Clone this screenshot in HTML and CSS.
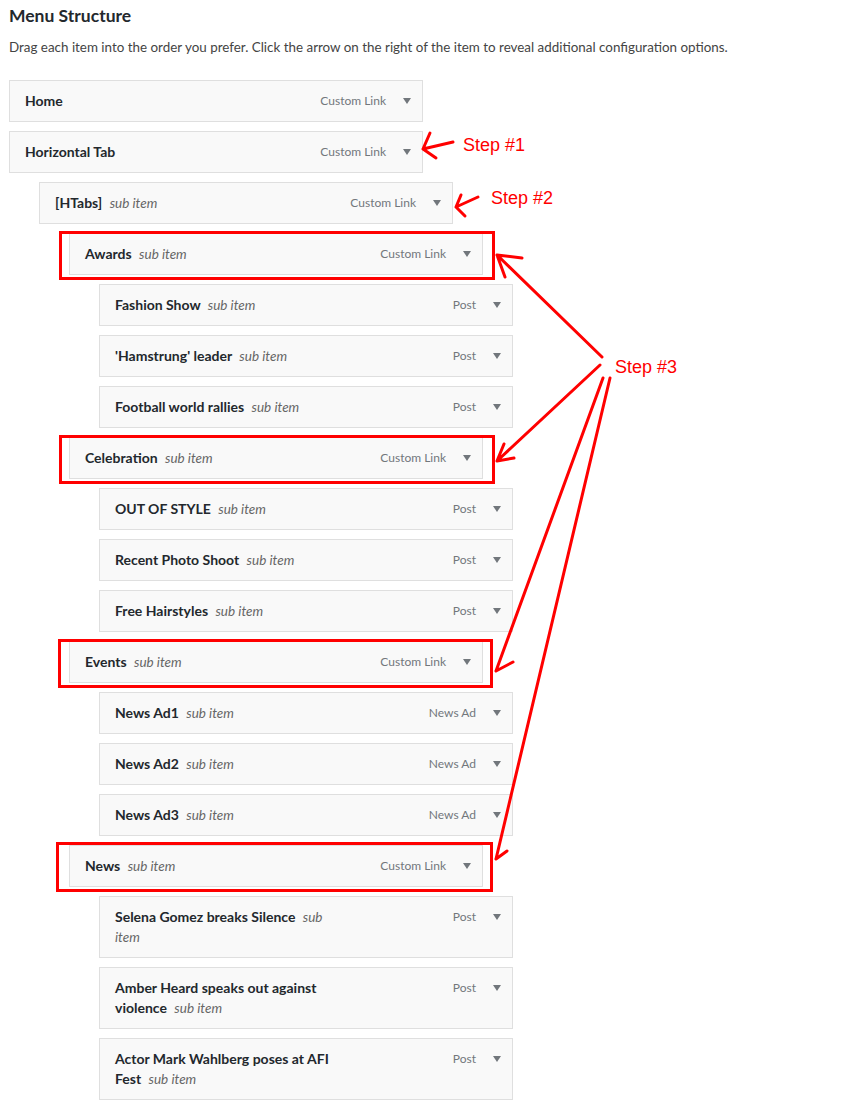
FILE: index.html
```html
<!DOCTYPE html>
<html lang="en">
<head>
<meta charset="utf-8">
<title>Menu Structure</title>
<link rel="stylesheet" href="styles.css">
</head>
<body>
<div class="page">
  <h2 class="heading">Menu Structure</h2>
  <p class="desc">Drag each item into the order you prefer. Click the arrow on the right of the item to reveal additional configuration options.</p>
  <ul class="menu">
    <li class="item d0"><span class="title">Home</span><span class="controls"><span class="type">Custom Link</span><span class="arrow"></span></span></li>
    <li class="item d0"><span class="title">Horizontal Tab</span><span class="controls"><span class="type">Custom Link</span><span class="arrow"></span></span></li>
    <li class="item d1"><span class="title">[HTabs] <em class="sub">sub item</em></span><span class="controls"><span class="type">Custom Link</span><span class="arrow"></span></span></li>
    <li class="item d2"><span class="title">Awards <em class="sub">sub item</em></span><span class="controls"><span class="type">Custom Link</span><span class="arrow"></span></span></li>
    <li class="item d3"><span class="title">Fashion Show <em class="sub">sub item</em></span><span class="controls"><span class="type">Post</span><span class="arrow"></span></span></li>
    <li class="item d3"><span class="title">'Hamstrung' leader <em class="sub">sub item</em></span><span class="controls"><span class="type">Post</span><span class="arrow"></span></span></li>
    <li class="item d3"><span class="title">Football world rallies <em class="sub">sub item</em></span><span class="controls"><span class="type">Post</span><span class="arrow"></span></span></li>
    <li class="item d2"><span class="title">Celebration <em class="sub">sub item</em></span><span class="controls"><span class="type">Custom Link</span><span class="arrow"></span></span></li>
    <li class="item d3"><span class="title">OUT OF STYLE <em class="sub">sub item</em></span><span class="controls"><span class="type">Post</span><span class="arrow"></span></span></li>
    <li class="item d3"><span class="title">Recent Photo Shoot <em class="sub">sub item</em></span><span class="controls"><span class="type">Post</span><span class="arrow"></span></span></li>
    <li class="item d3"><span class="title">Free Hairstyles <em class="sub">sub item</em></span><span class="controls"><span class="type">Post</span><span class="arrow"></span></span></li>
    <li class="item d2"><span class="title">Events <em class="sub">sub item</em></span><span class="controls"><span class="type">Custom Link</span><span class="arrow"></span></span></li>
    <li class="item d3"><span class="title">News Ad1 <em class="sub">sub item</em></span><span class="controls"><span class="type">News Ad</span><span class="arrow"></span></span></li>
    <li class="item d3"><span class="title">News Ad2 <em class="sub">sub item</em></span><span class="controls"><span class="type">News Ad</span><span class="arrow"></span></span></li>
    <li class="item d3"><span class="title">News Ad3 <em class="sub">sub item</em></span><span class="controls"><span class="type">News Ad</span><span class="arrow"></span></span></li>
    <li class="item d2"><span class="title">News <em class="sub">sub item</em></span><span class="controls"><span class="type">Custom Link</span><span class="arrow"></span></span></li>
    <li class="item d3"><span class="title">Selena Gomez breaks Silence <em class="sub">sub item</em></span><span class="controls"><span class="type">Post</span><span class="arrow"></span></span></li>
    <li class="item d3"><span class="title">Amber Heard speaks out against violence <em class="sub">sub item</em></span><span class="controls"><span class="type">Post</span><span class="arrow"></span></span></li>
    <li class="item d3"><span class="title">Actor Mark Wahlberg poses at AFI Fest <em class="sub">sub item</em></span><span class="controls"><span class="type">Post</span><span class="arrow"></span></span></li>
  </ul>

  <svg class="annot" width="843" height="1120" viewBox="0 0 843 1120" xmlns="http://www.w3.org/2000/svg">
    <g fill="none" stroke="#ff0000" stroke-width="3" stroke-linecap="round" stroke-linejoin="miter">
      <rect x="60.5" y="232.5" width="433" height="46"/>
      <rect x="60.5" y="436.5" width="433" height="46"/>
      <rect x="59.5" y="640.5" width="432" height="46"/>
      <rect x="57.5" y="843.5" width="434" height="47"/>

      <path d="M453 142 L423 149 M423 149 L430 133 M423 149 L436 158"/>
      <path d="M478 197 L456 207 M456 207 L461 195 M456 207 L465 216"/>

      <path d="M602 357 L497 255 M497 255 L522 258 M497 255 L505 277"/>
      <path d="M600 365 L497 461 M497 461 L514 458 M497 461 L504 444"/>
      <path d="M603 378 L496 671 M496 671 L513 662"/>
      <path d="M610 378 L496 859 M496 859 L507 851"/>
    </g>
    <g class="steps" fill="#ff0000">
      <text x="463" y="151">Step #1</text>
      <text x="491" y="204">Step #2</text>
      <text x="615" y="373">Step #3</text>
    </g>
  </svg>
</div>
</body>
</html>
```

FILE: styles.css
```css
html, body {
  margin: 0;
  padding: 0;
  background: #ffffff;
}

.page {
  position: relative;
  width: 843px;
  height: 1120px;
  padding: 0 0 0 9px;
  box-sizing: border-box;
  font-family: Lato, "Noto Sans", sans-serif;
  color: #23282d;
  overflow: hidden;
}

.heading {
  margin: 0;
  padding-top: 6px;
  font-size: 17.5px;
  line-height: 20px;
  font-weight: 700;
  color: #23282d;
}

.desc {
  margin: 0;
  padding-top: 11px;
  font-size: 13.4px;
  line-height: 20px;
  color: #444444;
}

.menu {
  list-style: none;
  margin: 0;
  padding: 23px 0 0 0;
}

.item {
  display: flex;
  align-items: flex-start;
  width: 414px;
  box-sizing: border-box;
  margin-top: 9px;
  padding: 10px 11px 10px 15px;
  border: 1px solid #dfdfdf;
  background: #f9f9f9;
}

.item:first-child {
  margin-top: 0;
}

.d1 { margin-left: 30px; }
.d2 { margin-left: 60px; }
.d3 { margin-left: 90px; }

.title {
  width: 222px;
  font-size: 14px;
  line-height: 20px;
  font-weight: 700;
  color: #23282d;
}

.sub {
  margin-left: 4px;
  font-style: italic;
  font-weight: 400;
  font-size: 13.5px;
  color: #666666;
}

.controls {
  margin-left: auto;
  display: flex;
  align-items: center;
  height: 20px;
  gap: 17px;
}

.type {
  font-size: 12px;
  line-height: 20px;
  color: #72777c;
}

.arrow {
  width: 0;
  height: 0;
  border-left: 4.5px solid transparent;
  border-right: 4.5px solid transparent;
  border-top: 6px solid #72777c;
}

.annot {
  position: absolute;
  top: 0;
  left: 0;
  pointer-events: none;
}

.steps text {
  font-family: "Liberation Sans", Arial, sans-serif;
  font-size: 18px;
}
```
